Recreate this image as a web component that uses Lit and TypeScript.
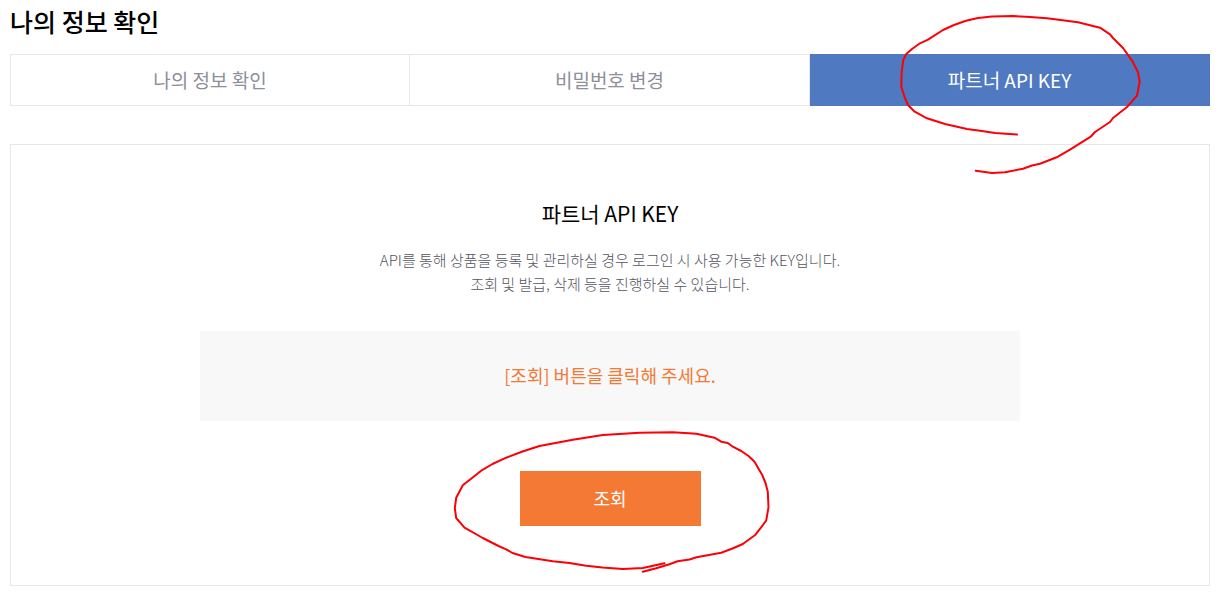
import { LitElement, html, css, svg } from "lit";
import { customElement, state } from "lit/decorators.js";
import { classMap } from "lit/directives/class-map.js";

const TABS = ["나의 정보 확인", "비밀번호 변경", "파트너 API KEY"];

// Hand-drawn loop around the partner key tab.
const TAB_LOOP =
  "M1017 134.6L995 133L980 130.7L967 129L945 124L927 118.3L914.7 111.7L908 105L904.7 97.3L901.3 87L901.7 71.7L903.3 60L906 54.3L912 49L920 43.3L928 39.7L943 30L954 25L966 20.7L978 18L992 16.4L1013 16L1030 17L1047 18.3L1078 22.3L1100 27.7L1110 34.3L1113 38L1123 48L1132.7 61.7L1138 72.3L1139.7 81.7L1137 95.7L1127 107L1113 118L1110 122L1095 132L1090.7 136.7L1070 149.7L1056.7 157.3L1040 163.7L1032 165.5L1023 168.7L1005 172.3L992 173L975.7 170.7";

// Hand-drawn loop around the lookup button.
const BUTTON_LOOP =
  "M643.3 571.7L656.7 568.3L670 564.3L678 561.3L690 559.5L697 557.3L721.7 552.7L733 548.5L743.3 544L756 534.7L766.7 520.7L769 507.3L768.3 491.7L766 483L762.7 475L755 461.7L749 456L741.7 451L733.3 446.7L728.3 443L721.7 441.7L715 437.7L697 433.7L673.3 432.3L640 432.7L603.3 435L573.3 439.7L540 446L523 451.5L506.7 457.7L493 464L481.7 470.7L463.3 485.3L456.7 497.7L455.3 508.3L456.7 518L465 527.7L483.3 538L499 546L506.7 549.3L513 553L526 557L553.3 561.3L570 563L586.7 565.7L603 567.5L623.3 569L643.3 568L665 563.3";

@customElement("app-root")
export class AppRoot extends LitElement {
  static styles = css`
    :host {
      display: block;
      padding: 5px 9px 13px 10px;
      background: #fff;
      color: #000;
      font-family: "Noto Sans CJK KR", sans-serif;
      overflow: hidden;
    }
    * {
      box-sizing: border-box;
    }
    .title {
      margin: 0 0 17px;
      font-size: 25px;
      line-height: 32px;
      font-weight: 500;
    }
    .tabs {
      display: grid;
      grid-template-columns: repeat(3, 1fr);
      margin-bottom: 38px;
    }
    .cell {
      position: relative;
      display: grid;
    }
    .tab {
      height: 52px;
      padding: 0 0 2px;
      border: 1px solid #e6e6e6;
      border-left-width: 0;
      background: #fff;
      color: #8d8f99;
      font: inherit;
      font-size: 19px;
      cursor: pointer;
    }
    .cell:first-child .tab {
      border-left-width: 1px;
    }
    .tab.active {
      border-color: #4f79c1;
      background: #4f79c1;
      color: #fff;
    }
    .panel {
      display: flex;
      flex-direction: column;
      align-items: center;
      padding: 52px 24px 59px;
      border: 1px solid #e6e6e6;
      text-align: center;
    }
    .heading {
      margin: 0 0 19px;
      font-size: 21px;
      line-height: 32px;
      font-weight: 400;
    }
    .desc {
      margin: 0 0 35px;
      color: #55555f;
      font-size: 15px;
      line-height: 24px;
      font-weight: 300;
    }
    .notice {
      width: 100%;
      max-width: 820px;
      margin: 0 0 50px;
      padding: 32px 16px 34px;
      background: #f8f8f8;
      color: #f37935;
      font-size: 18px;
      line-height: 24px;
    }
    .action {
      position: relative;
    }
    .lookup {
      display: block;
      width: 181px;
      height: 55px;
      padding: 0 0 2px;
      border: 0;
      background: #f37935;
      color: #fff;
      font: inherit;
      font-size: 18px;
      cursor: pointer;
    }
    .mark {
      position: absolute;
      left: 50%;
      z-index: 1;
      transform: translateX(-50%);
      fill: none;
      stroke: #fb0007;
      stroke-width: 2;
      stroke-linecap: round;
      stroke-linejoin: round;
      pointer-events: none;
    }
    .mark-tab {
      top: -44px;
    }
    .mark-button {
      top: -46px;
    }
  `;

  @state() private active = 2;

  render() {
    return html`
      <h1 class="title">나의 정보 확인</h1>
      <nav class="tabs">
        ${TABS.map(
          (label, i) => html`<div class="cell">
            <button
              type="button"
              class=${classMap({ tab: true, active: i === this.active })}
              @click=${() => (this.active = i)}
            >${label}</button>
            ${i === 2
              ? html`<svg class="mark mark-tab" width="280" height="170" viewBox="870 10 280 170" aria-hidden="true">
                  ${svg`<path d=${TAB_LOOP} />`}
                </svg>`
              : null}
          </div>`
        )}
      </nav>
      <section class="panel">
        <h2 class="heading">파트너 API KEY</h2>
        <p class="desc">
          API를 통해 상품을 등록 및 관리하실 경우 로그인 시 사용 가능한 KEY입니다.<br />
          조회 및 발급, 삭제 등을 진행하실 수 있습니다.
        </p>
        <p class="notice">[조회] 버튼을 클릭해 주세요.</p>
        <div class="action">
          <button type="button" class="lookup">조회</button>
          <svg class="mark mark-button" width="341" height="155" viewBox="440 425 341 155" aria-hidden="true">
            ${svg`<path d=${BUTTON_LOOP} />`}
          </svg>
        </div>
      </section>
    `;
  }
}
